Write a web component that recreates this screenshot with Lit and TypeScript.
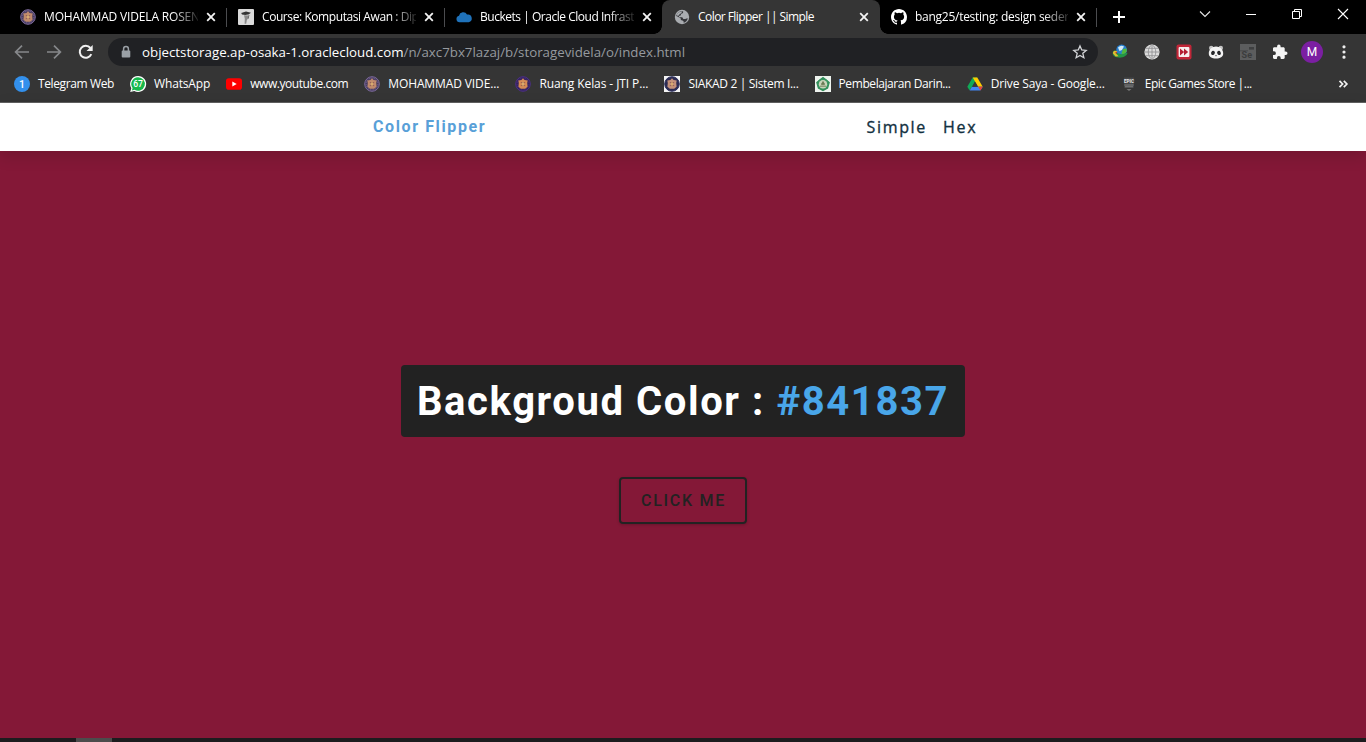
import { LitElement, html, svg, css, type TemplateResult } from "lit";
import { customElement, property } from "lit/decorators.js";
import { classMap } from "lit/directives/class-map.js";

/** A single line of text tracked so that it spans a given advance width. */
@customElement("fit-text")
class FitText extends LitElement {
  @property() text = "";
  @property({ type: Number }) span = 0;

  static styles = css`
    :host { display: block; white-space: pre; flex: none; overflow: visible; }
    .line { display: inline-block; white-space: pre; }
  `;

  updated() {
    const line = this.renderRoot.querySelector(".line") as HTMLElement;
    if (!line || !this.span) return;
    line.style.letterSpacing = "0px";
    const natural = line.getBoundingClientRect().width;
    line.style.letterSpacing = `${(this.span - natural) / this.text.length}px`;
    this.style.width = `${this.span}px`;
  }

  render() {
    return html`<span class="line">${this.text}</span>`;
  }
}

const crest = (ring: string, fill: string, core: string, white = false) => svg`
  ${white ? svg`<rect width="16" height="16" fill="#f4f4f4"/>` : null}
  <circle cx="8" cy="8" r="7.3" fill="${fill}" stroke="${ring}" stroke-width="1"/>
  <circle cx="8" cy="8" r="5.9" fill="none" stroke="${ring}" stroke-width=".8" stroke-dasharray="1.4 1"/>
  <path d="M8 2.2l1.6 1.7 3.1.6-.5 2.6.4 3.7-2.4 2H5.8l-2.4-2 .4-3.7-.5-2.6 3.1-.6z" fill="${core}"/>
  <path d="M5.8 6.6h4.4M5.8 9.6h4.4" stroke="#7e4a50" stroke-width=".7"/><path d="M8 5l1.2 3L8 11 6.8 8z" fill="#d9ad70"/>`;

const icons: Record<string, TemplateResult> = {
  crest: svg`${crest("#7d6a9c", "#453a5c", "#c08a6c")}`,
  crestDark: svg`${crest("#4c2f86", "#33235a", "#d58a54")}`,
  crestWhite: svg`${crest("#2c3060", "#2f2c50", "#c4917a", true)}`,
  moodle: svg`<rect width="16" height="16" rx="1" fill="#dadada"/>
    <path d="M3.2 4L8 2.4l5 1.3-2.2 1.5-3.4.9-3.4-.6z" fill="#333"/>
    <path d="M6 6.2l4 .2.6 2-1.6 1.8-.8 4.6H6.6l.2-5z" fill="#8a8a8a"/>
    <path d="M10 5.5l.8.8-.5 3-1 1" stroke="#555" stroke-width=".8" fill="none"/>`,
  cloud: svg`<path d="M3.5 13.2a3.3 3.3 0 0 1-.5-6.5 4.3 4.3 0 0 1 8-1.1 3.8 3.8 0 0 1 1.7 7.6z" fill="#1f72ba"/>`,
  globe: svg`<circle cx="8" cy="8" r="7.2" fill="#a9acb0"/>
    <path d="M9.2 2.4L9 4l-1.9.9-.5 1.7-1.7.5.2 1.2h3.2l1 1.8h2l1.9-.9.5.3c-.4 2-2 3.7-4.1 4.3l.1-1.4-1.2-1-1.7-.5V9.6L4 7.8 2.2 6.9C2.8 4.2 5.5 2 8.3 2.2z" fill="#35363a"/>
    <path d="M2.8 5.7C4 3.4 5.8 2.4 8 2.4l-.6 1.8-1.8.8-.5 1.3-1.5.6z" fill="#a9acb0"/>`,
  github: svg`<path fill="#fff" fill-rule="evenodd" d="M8 0C3.58 0 0 3.58 0 8c0 3.54 2.29 6.53 5.47 7.59.4.07.55-.17.55-.38 0-.19-.01-.82-.01-1.49-2.01.37-2.53-.49-2.69-.94-.09-.23-.48-.94-.82-1.13-.28-.15-.68-.52-.01-.53.63-.01 1.08.58 1.23.82.72 1.21 1.87.87 2.33.66.07-.52.28-.87.51-1.07-1.78-.2-3.64-.89-3.64-3.95 0-.87.31-1.59.82-2.15-.08-.2-.36-1.02.08-2.12 0 0 .67-.21 2.2.82a7.6 7.6 0 0 1 4 0c1.53-1.04 2.2-.82 2.2-.82.44 1.1.16 1.92.08 2.12.51.56.82 1.27.82 2.15 0 3.07-1.87 3.75-3.65 3.95.29.25.54.73.54 1.48 0 1.07-.01 1.93-.01 2.2 0 .21.15.46.55.38A8.01 8.01 0 0 0 16 8c0-4.42-3.58-8-8-8z"/>`,
  telegram: svg`<circle cx="8" cy="8" r="8" fill="#3390ec"/><text x="8" y="11.8" text-anchor="middle" font-family="Roboto" font-weight="500" font-size="10.5" fill="#fff">1</text>`,
  whatsapp: svg`<path d="M8 0a8 8 0 1 1-3.7 15L.2 16l1.1-3.8A8 8 0 0 1 8 0z" fill="#fff"/><path d="M8 1.2a6.8 6.8 0 1 1-3.5 12.6l-2.6.7.7-2.5A6.8 6.8 0 0 1 8 1.2z" fill="#17b84c"/><text x="8.1" y="11" text-anchor="middle" font-family="Roboto" font-weight="500" font-size="8.6" fill="#fff">67</text>`,
  youtube: svg`<rect y="2.3" width="16" height="11.4" rx="2.8" fill="#f00"/><path d="M6.3 5.5v5L10.7 8z" fill="#fff"/>`,
  green: svg`<rect width="16" height="16" fill="#eef3ee"/><path d="M8 .8l6.9 5.4-1.8 6.3L8 15.3l-5.1-2.8L1.1 6.2z" fill="#2f8a57"/><circle cx="8" cy="8" r="5.8" fill="#37945f"/><circle cx="8" cy="8.2" r="4.2" fill="#c9d4bb"/><path d="M5 10.2h6M6.2 8.6h3.6M8 5.5l1.4 2.4H6.6z" stroke="#6b7a55" stroke-width=".9" fill="#6b7a55"/>`,
  drive: svg`<path d="M5.7 1.6h4.6L5.1 10.7l-2.6 3.5L.3 10.8z" fill="#10a957"/><path d="M5.7 1.6h4.6l5.4 9.2h-4.6z" fill="#fc0"/><path d="M5 10.8h10.7l-2.3 3.6H2.6z" fill="#4285f4"/><path d="M8 5.7l2.9 5.1H5.1z" fill="#35363a"/><path d="M11.1 10.8h4.6l-2.3 3.6z" fill="#ea4335"/>`,
  epic: svg`<path d="M3 1.5h10v10.3H3z" fill="#454648"/><text x="8" y="7.3" text-anchor="middle" font-family="Roboto" font-weight="900" font-size="5.8" textLength="10" lengthAdjust="spacingAndGlyphs" fill="#e2e2e2">EPIC</text><path d="M3.4 9h9.2M4 10.8h8" stroke="#909090" stroke-width=".8"/><path d="M5.5 13.2h5L8 14.7z" fill="#8a8a8a"/>`,
  close: svg`<path d="M4.2 4.2l7.6 7.6M11.8 4.2l-7.6 7.6" stroke="#f4f4f4" stroke-width="1.8"/>`,
  plus: svg`<path d="M8 2v12M2 8h12" stroke="#fff" stroke-width="2"/>`,
  back: svg`<path d="M15 8H2M8 1.6L1.6 8 8 14.4" fill="none" stroke="#86888b" stroke-width="1.7"/>`,
  forward: svg`<path d="M1 8h13M8 1.6L14.4 8 8 14.4" fill="none" stroke="#86888b" stroke-width="1.7"/>`,
  reload: svg`<path d="M13.3 10.2A6 6 0 1 1 12.4 4" fill="none" stroke="#f1f1f1" stroke-width="2"/><path d="M14.7.9v6.2H8.5z" fill="#f1f1f1"/>`,
  lock: svg`<rect x="3.7" y="6.4" width="8.6" height="7.2" rx="1" fill="#9aa0a6"/><path d="M5.6 7V5a2.4 2.4 0 0 1 4.8 0v2" fill="none" stroke="#9aa0a6" stroke-width="1.5"/>`,
  star: svg`<path d="M8 1.9l1.75 4.1 4.45.4-3.4 2.95 1.05 4.35L8 11.4l-3.85 2.3L5.2 9.35 1.8 6.4l4.45-.4z" fill="none" stroke="#d3d5d8" stroke-width="1.3"/>`,
  idm: svg`<circle cx="9.6" cy="6" r="5.4" fill="#277fd0"/><path d="M6 3.5Q9 .4 12 2.5L10 6 7.5 7z" fill="#d3eaf4"/><path d="M11 5l3.5-.5.3 3-3 3-2.5-1z" fill="#52b93c"/><path d="M.8 10.5C0 6.4 3 5.6 5 7.4L4.6 9 10 10.2l5.4-1.5c.2 3.4-6 5.5-9 4.8C4 13.2 1.5 12.6.8 10.5z" fill="#239644"/><path d="M1 9.5C.8 6.5 3.2 6 5.3 7.6L3.6 9.3l3 3-3 .3z" fill="#e2bd2f"/><path d="M3 8.5l2.2-.7-.4 2z" fill="#c33"/>`,
  grid: svg`<circle cx="8" cy="8" r="7.6" fill="#dcdcdc"/><path d="M.5 8h15M1.6 4.3h12.8M1.6 11.7h12.8M8 .4v15.2M8 .4C3 4 3 12 8 15.6M8 .4c5 3.6 5 11.6 0 15.2" fill="none" stroke="#8b8c8e" stroke-width=".8"/>`,
  skip: svg`<rect x=".5" y=".5" width="15" height="15" rx="2" fill="#c12638"/><rect x="2.6" y="3" width="10.8" height="10" rx="1" fill="#f7eeee"/><path d="M4 4.4L8.2 8 4 11.6zM8 4.4L12.2 8 8 11.6z" fill="#b51e32"/>`,
  panda: svg`<circle cx="3.2" cy="4" r="2.2" fill="#c4c4c4"/><circle cx="12.8" cy="4" r="2.2" fill="#c4c4c4"/><path d="M8 2.6c4 0 7.2 3.2 7.2 6.8 0 3.4-3 5-7.2 5s-7.2-1.6-7.2-5c0-3.6 3.2-6.8 7.2-6.8z" fill="#f3f3f3"/><ellipse cx="5" cy="8.9" rx="1.8" ry="2.2" transform="rotate(25 5 8.9)" fill="#26272a"/><ellipse cx="11" cy="8.9" rx="1.8" ry="2.2" transform="rotate(-25 11 8.9)" fill="#26272a"/><path d="M7 11.2h2l-1 1.2z" fill="#26272a"/>`,
  selenium: svg`<rect width="16" height="16" fill="#5c5d5e"/><rect x="9" y="3" width="5" height="2.6" fill="#3f4041"/><path d="M0 6.8h8" stroke="#484949"/><text x="1.6" y="14.4" font-family="Roboto" font-weight="700" font-size="9" fill="#3b3c3d">Se</text>`,
  puzzle: svg`<path d="M13.7 7.4h-1V4.6c0-.7-.6-1.3-1.3-1.3H8.6v-1a1.75 1.75 0 0 0-3.5 0v1H2.3C1.6 3.3 1 3.9 1 4.6v2.7h1a1.9 1.9 0 0 1 0 3.8H1v2.7c0 .7.6 1.2 1.3 1.2h2.6v-1a1.9 1.9 0 0 1 3.8 0v1h2.7c.7 0 1.3-.5 1.3-1.2V11h1a1.8 1.8 0 0 0 0-3.6z" fill="#f5f5f5"/>`,
  dots: svg`<path d="M8 1.2a1.6 1.6 0 1 1 0 3.2 1.6 1.6 0 0 1 0-3.2zM8 6.4a1.6 1.6 0 1 1 0 3.2 1.6 1.6 0 0 1 0-3.2zM8 11.6a1.6 1.6 0 1 1 0 3.2 1.6 1.6 0 0 1 0-3.2z" fill="#eee"/>`,
  chevron: svg`<path d="M3 5.5l5 5 5-5" fill="none" stroke="#e8e8e8" stroke-width="1.1"/>`,
  minimize: svg`<path d="M3 8.5h10" stroke="#fff"/>`,
  restore: svg`<path d="M3.5 5.5h7v7h-7zM5.5 5.5v-2h7v7h-2" fill="none" stroke="#fff"/>`,
  exit: svg`<path d="M3 3l10 10M13 3L3 13" stroke="#fff" stroke-width="1.1"/>`,
  more: svg`<path d="M4.5 4.8L7.6 8l-3.1 3.2M8.8 4.8L11.9 8l-3.1 3.2" fill="none" stroke="#f1f1f1" stroke-width="1.7"/>`,
};

const icon = (name: string) => html`<svg class="icon" viewBox="0 0 16 16" aria-hidden="true">${icons[name]}</svg>`;

const tabs = [
  { icon: "crest", title: "MOHAMMAD VIDELA ROSEN", span: 156 },
  { icon: "moodle", title: "Course: Komputasi Awan : Dip", span: 156.5 },
  { icon: "cloud", title: "Buckets | Oracle Cloud Infrast", span: 154 },
  { icon: "globe", title: "Color Flipper || Simple", span: 116, active: true },
  { icon: "github", title: "bang25/testing: design seder", span: 154 },
];

const bookmarks = [
  { icon: "telegram", title: "Telegram Web", span: 76 },
  { icon: "whatsapp", title: "WhatsApp", span: 56 },
  { icon: "youtube", title: "www.youtube.com", span: 98 },
  { icon: "crest", title: "MOHAMMAD VIDE...", span: 111 },
  { icon: "crestDark", title: "Ruang Kelas - JTI P...", span: 109 },
  { icon: "crestWhite", title: "SIAKAD 2 | Sistem I...", span: 110 },
  { icon: "green", title: "Pembelajaran Darin...", span: 112 },
  { icon: "drive", title: "Drive Saya - Google...", span: 114 },
  { icon: "epic", title: "Epic Games Store |...", span: 107 },
];

const extensions = ["idm", "grid", "skip", "panda", "selenium", "puzzle"];

@customElement("app-root")
class AppRoot extends LitElement {
  static styles = css`
    :host {
      display: flex; flex-direction: column; height: 742px; overflow: hidden;
      font-family: "Open Sans", "Noto Sans", sans-serif; font-size: 12px; color: #fff;
    }
    * { box-sizing: border-box; }
    .icon { width: 16px; height: 16px; flex: none; display: block; overflow: visible; }

    .tabstrip { height: 34px; flex: none; background: #000; display: flex; padding-left: 8px; }
    .tab { width: 218px; height: 34px; flex: none; display: flex; align-items: center; padding: 0 7px 0 12px; position: relative; }
    .tab:last-of-type { padding-left: 11px; width: 216px; }
    .title { width: 154px; margin: 0 6px 0 8px; overflow: hidden; line-height: 18px; flex: none; }
    .title.faded { mask-image: linear-gradient(90deg, #000 128px, transparent 158px); }
    .tab.active .title, .tab:last-of-type .title { width: 153px; }
    .tab .shut { display: flex; margin-left: -1px; }
    .tab.divided::after { content: ""; position: absolute; right: -1px; top: 8px; width: 1px; height: 19px; background: #4b4c4f; }
    .tab.active { background: #353535; border-radius: 8px 8px 0 0; }
    .tab.active::before, .tab.active::after { content: ""; position: absolute; bottom: 0; width: 8px; height: 8px; }
    .tab.active::before { left: -8px; background: radial-gradient(circle at 0 0, #000 7.5px, #353535 8px); }
    .tab.active::after { right: -8px; background: radial-gradient(circle at 100% 0, #000 7.5px, #353535 8px); }
    .new { margin: 9px 0 0 15px; }
    .window { margin-left: auto; display: flex; gap: 30px; padding: 6px 15px 0 0; }

    .toolbar { height: 36px; flex: none; background: #353535; display: flex; align-items: center; padding: 0 14px 0 14px; }
    .nav { display: flex; gap: 16px; }
    .address { width: 990px; height: 28px; margin-left: 14px; border-radius: 14px; background: #202124; display: flex; align-items: center; padding: 0 10px 0 10px; font-size: 13.3px; line-height: 20px; }
    .address .url { display: flex; margin-left: 8px; }
    .path { color: #969a9f; }
    .address .mark { margin-left: auto; }
    .extensions { display: flex; gap: 16px; margin-left: 14px; }
    .avatar { width: 22px; height: 22px; margin-left: 13px; border-radius: 50%; background: #7b1fa2; display: flex; align-items: center; justify-content: center; font: 400 12px Roboto, sans-serif; }
    .menu { margin-left: auto; }

    .bookmarks { height: 33px; flex: none; background: #353535; border-bottom: 1px solid #626262; display: flex; align-items: center; gap: 16.1px; padding: 0 15px 5px 14px; }
    .bookmark { display: flex; align-items: center; gap: 8px; line-height: 18px; }
    .overflow { margin-left: auto; }

    .navbar { height: 48px; flex: none; background: #fff; display: flex; align-items: center; justify-content: space-between; padding: 0 388.5px 0 373px; box-shadow: 0 5px 15px rgba(0, 0, 0, 0.15); z-index: 1; }
    .brand { color: #58a0d8; font: 700 16px/24px Roboto, sans-serif; }
    .links { display: flex; gap: 16px; font-size: 16px; line-height: 24px; color: #12303f; -webkit-text-stroke: 0.35px #12303f; padding-bottom: 1px; }

    .stage { flex: 1; background: #841837; display: flex; flex-direction: column; align-items: center; padding-top: 214px; }
    .headline { margin: 0; width: 564px; height: 72px; background: #222; border-radius: 4px; padding: 2px 16px 0; display: flex; align-items: center; font: 700 40px/50px Roboto, sans-serif; }
    .value { color: #49a6e9; }
    .flip { margin: 40px 0 0; width: 128px; height: 47px; border: 2px solid #222; border-radius: 4px; background: transparent; color: #222; font: 500 16px/20px Roboto, sans-serif; padding: 0 0 0 20px; display: flex; align-items: center; box-shadow: 0 1px 3px rgba(0, 0, 0, 0.2); }

    .taskbar { height: 4px; flex: none; background: #1c1c1e; padding-left: 76px; }
    .running { width: 36px; height: 4px; background: #4c4c4c; }
  `;

  render() {
    return html`
      <div class="tabstrip">
        ${tabs.map((t, i) => html`
          <section class=${classMap({ tab: true, active: !!t.active, divided: i !== 2 && i !== 3 })}>
            ${icon(t.icon)}
            <div class=${classMap({ title: true, faded: !t.active })}><fit-text .text=${t.title} .span=${t.span}></fit-text></div>
            <span class="shut">${icon("close")}</span>
          </section>`)}
        <div class="new">${icon("plus")}</div>
        <div class="window">${["chevron", "minimize", "restore", "exit"].map(icon)}</div>
      </div>
      <div class="toolbar">
        <div class="nav">${["back", "forward", "reload"].map(icon)}</div>
        <div class="address">
          ${icon("lock")}
          <div class="url">
            <fit-text .text=${"objectstorage.ap-osaka-1.oraclecloud.com"} .span=${261.5}></fit-text>
            <fit-text class="path" .text=${"/n/axc7bx7lazaj/b/storagevidela/o/index.html"} .span=${281.5}></fit-text>
          </div>
          <div class="mark">${icon("star")}</div>
        </div>
        <div class="extensions">${extensions.map(icon)}</div>
        <div class="avatar">M</div>
        <div class="menu">${icon("dots")}</div>
      </div>
      <div class="bookmarks">
        ${bookmarks.map((b) => html`
          <div class="bookmark">${icon(b.icon)}<fit-text .text=${b.title} .span=${b.span}></fit-text></div>`)}
        <div class="overflow">${icon("more")}</div>
      </div>
      <nav class="navbar">
        <fit-text class="brand" .text=${"Color Flipper"} .span=${113.2}></fit-text>
        <div class="links">
          <fit-text .text=${"Simple"} .span=${60.5}></fit-text>
          <fit-text .text=${"Hex"} .span=${34.5}></fit-text>
        </div>
      </nav>
      <main class="stage">
        <h2 class="headline">
          <fit-text .text=${"Backgroud Color : "} .span=${359.5}></fit-text>
          <fit-text class="value" .text=${"#841837"} .span=${172.5}></fit-text>
        </h2>
        <button class="flip"><fit-text .text=${"CLICK ME"} .span=${85}></fit-text></button>
      </main>
      <div class="taskbar"><div class="running"></div></div>
    `;
  }
}
